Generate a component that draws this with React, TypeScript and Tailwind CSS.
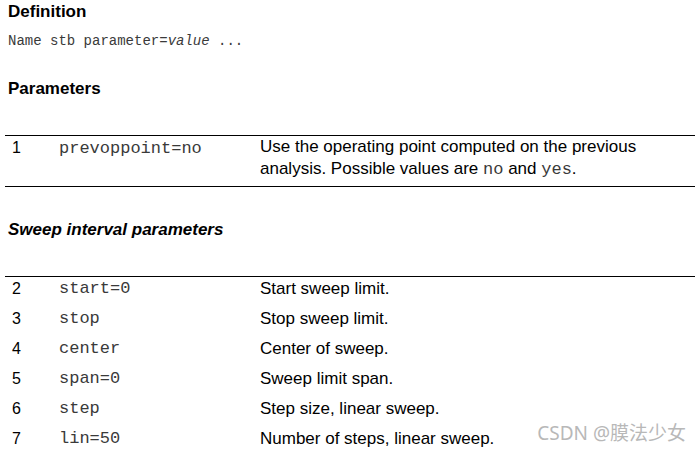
import React from "react";

const sans = "font-['Liberation_Sans',Arial,sans-serif]";
const mono = "font-['Liberation_Mono','Courier_New',monospace]";

const sweepRows = [
  { n: 2, p: "start=0", d: "Start sweep limit." },
  { n: 3, p: "stop", d: "Stop sweep limit." },
  { n: 4, p: "center", d: "Center of sweep." },
  { n: 5, p: "span=0", d: "Sweep limit span." },
  { n: 6, p: "step", d: "Step size, linear sweep." },
  { n: 7, p: "lin=50", d: "Number of steps, linear sweep." },
];

function Row({ n, p, children }: { n: number; p: string; children: React.ReactNode }) {
  return (
    <div className="flex items-start">
      <div className="w-[54px] pl-[7px] text-[16px]">{n}</div>
      <div className={`w-[201px] ${mono} text-[17px] text-[#3a3a3a]`}>{p}</div>
      <div className="flex-1 text-[17px]">{children}</div>
    </div>
  );
}

export default function App() {
  return (
    <div className={`relative w-[700px] h-[452px] bg-white text-black ${sans} overflow-hidden`}>
      <div className="pl-2 pt-[2px]">
        <h2 className="font-bold text-[17px] leading-[20px]">Definition</h2>
        <p className={`${mono} text-[14px] leading-[16px] mt-[11px] text-[#3a3a3a]`}>
          Name stb parameter=<i>value</i> ...
        </p>
        <h2 className="font-bold text-[17px] leading-[20px] mt-[30px]">Parameters</h2>
      </div>

      <div className="mx-[5px] mt-[36px] border-t border-b border-black pt-0 pb-[5px]">
        <Row n={1} p="prevoppoint=no">
          <div className="leading-[22px]">
            Use the operating point computed on the previous
            <br />
            analysis. Possible values are <span className={`${mono} text-[#3a3a3a]`}>no</span> and{" "}
            <span className={`${mono} text-[#3a3a3a]`}>yes</span>.
          </div>
        </Row>
      </div>

      <h3 className="pl-2 mt-[33px] font-bold italic text-[17px] leading-[20px]">
        Sweep interval parameters
      </h3>

      <div className="mx-[5px] mt-[36px] border-t border-black flex flex-col">
        {sweepRows.map((r) => (
          <div key={r.n} className="h-[30px] leading-[24px]">
            <Row n={r.n} p={r.p}>
              {r.d}
            </Row>
          </div>
        ))}
      </div>

      <div className="absolute right-[14px] bottom-[5px] text-[19px] text-[#b8b8b8] font-['Noto_Sans','Noto_Sans_CJK_SC',sans-serif]">
        CSDN @膜法少女
      </div>
    </div>
  );
}
